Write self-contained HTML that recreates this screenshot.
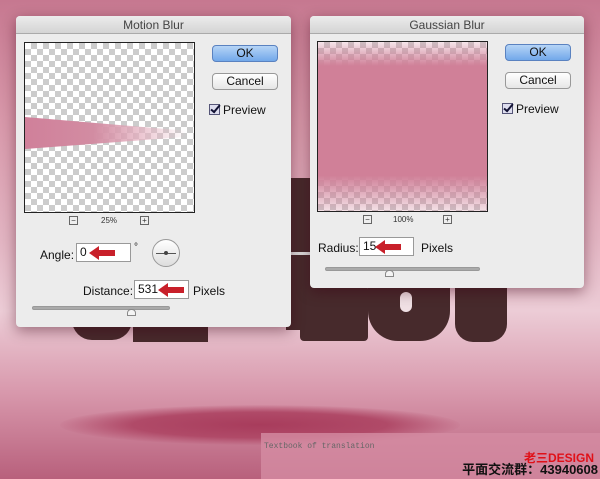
<!DOCTYPE html>
<html><head><meta charset="utf-8"><style>
*{margin:0;padding:0;box-sizing:border-box}
body{width:600px;height:479px;overflow:hidden;position:relative;font-family:"Liberation Sans",sans-serif;
background:linear-gradient(180deg,#c67890 0%,#d898aa 25%,#e2b4c2 50%,#ecccd6 65%,#d898ac 82%,#b8607c 100%)}
.abs{position:absolute}
.dlg{position:absolute;background:#ececec;border-radius:4px;box-shadow:0 4px 14px rgba(60,0,20,.45);overflow:hidden}
.tb{height:18px;background:linear-gradient(#ececec,#d4d4d4);border-bottom:1px solid #aaa;text-align:center;font-size:12px;line-height:18px;color:#444}
.chk{background-color:#fff;background-image:linear-gradient(45deg,#ccc 25%,transparent 25%,transparent 75%,#ccc 75%),linear-gradient(45deg,#ccc 25%,transparent 25%,transparent 75%,#ccc 75%);background-size:12px 12px;background-position:0 0,6px 6px;border:1px solid #222}
.btn{position:absolute;width:66px;height:17px;border-radius:4px;border:1px solid #999;background:linear-gradient(#fff,#e6e6e6);font-size:12px;text-align:center;line-height:15px;color:#111}
.ok{background:linear-gradient(#b6d4f6,#72a8ea);border-color:#5a82c0}
.cb{position:absolute;font-size:12px;color:#111}
.cb i{display:inline-block;width:11px;height:11px;border:1px solid #557;background:#dde;vertical-align:-1px;margin-right:3px;position:relative}
.cb i:after{content:"";position:absolute;left:3px;top:-2px;width:3px;height:8px;border:solid #113;border-width:0 2px 2px 0;transform:rotate(40deg)}
.lbl{position:absolute;font-size:12px;color:#111}
.inp{position:absolute;background:#fff;border:1px solid #999;height:19px;font-size:12px;line-height:17px;padding-left:3px;color:#111}
.arr{position:absolute;width:26px;height:14px}
.sl{position:absolute;height:4px;border-radius:2px;background:#aaa;border:1px solid #999}
.zm{position:absolute;font-size:8px;color:#333}
.zb{position:absolute;width:9px;height:9px;border:1px solid #666;font-size:8px;line-height:7px;text-align:center;color:#333;background:#eee}
.br{background:#472a2c;position:absolute}
</style></head><body>
<div class="br" style="left:286px;top:178px;width:26px;height:152px"></div>
<div class="abs" style="left:286px;top:252px;width:26px;height:3px;background:#ddd"></div>
<div class="br" style="left:300px;top:285px;width:68px;height:56px;border-radius:4px"></div>
<div class="br" style="left:368px;top:285px;width:82px;height:56px;border-radius:0 0 30px 30px"></div>
<div class="abs" style="left:400px;top:292px;width:12px;height:20px;border-radius:6px;background:#f0e0e4"></div>
<div class="br" style="left:455px;top:285px;width:52px;height:57px;border-radius:0 0 18px 18px"></div>
<div class="br" style="left:72px;top:318px;width:60px;height:22px;border-radius:0 0 20px 20px"></div>
<div class="br" style="left:133px;top:318px;width:75px;height:24px"></div>
<div class="abs" style="left:60px;top:405px;width:400px;height:40px;border-radius:50%;background:radial-gradient(ellipse at center,#a83c5c 0%,#b04a68 45%,rgba(190,90,120,0) 72%)"></div>

<div class="dlg" style="left:16px;top:16px;width:275px;height:311px">
<div class="tb">Motion Blur</div>
<div class="chk abs" style="left:8px;top:26px;width:171px;height:171px;overflow:hidden">
<div class="abs" style="left:0;top:74px;width:170px;height:32px;background:linear-gradient(90deg,#d0809a 0%,#d28ca2 40%,rgba(230,180,195,.7) 70%,rgba(255,255,255,0) 95%);clip-path:polygon(0 0,100% 45%,100% 60%,0 100%)"></div>
</div>
<div class="zb" style="left:53px;top:200px">−</div>
<div class="zm" style="left:85px;top:200px">25%</div>
<div class="zb" style="left:124px;top:200px">+</div>
<div class="btn ok" style="left:196px;top:29px">OK</div>
<div class="btn" style="left:196px;top:57px">Cancel</div>
<div class="cb" style="left:193px;top:87px"><i></i>Preview</div>
<div class="lbl" style="left:24px;top:232px">Angle:</div>
<div class="inp" style="left:60px;top:227px;width:55px">0</div>
<svg class="arr" style="left:73px;top:230px" viewBox="0 0 26 14"><path d="M0 7L10 0V4H26V10H10V14Z" fill="#c8202a"/></svg>
<div class="lbl" style="left:118px;top:226px;font-size:10px">°</div>
<div class="abs" style="left:136px;top:223px;width:28px;height:28px;border-radius:50%;border:1px solid #999;background:linear-gradient(#fff,#ddd)"><div class="abs" style="left:3px;top:13px;width:20px;height:1px;background:#555"></div><div class="abs" style="left:11px;top:11px;width:4px;height:4px;border-radius:50%;background:#444"></div></div>
<div class="lbl" style="left:67px;top:268px">Distance:</div>
<div class="inp" style="left:118px;top:264px;width:55px">531</div>
<svg class="arr" style="left:142px;top:267px" viewBox="0 0 26 14"><path d="M0 7L10 0V4H26V10H10V14Z" fill="#c8202a"/></svg>
<div class="lbl" style="left:177px;top:268px">Pixels</div>
<div class="sl" style="left:16px;top:290px;width:138px"></div>
<div class="abs" style="left:111px;top:293px;width:9px;height:7px;border:1px solid #888;border-radius:4px 4px 0 0;background:#f4f4f4"></div>
</div>

<div class="dlg" style="left:310px;top:16px;width:274px;height:272px">
<div class="tb">Gaussian Blur</div>
<div class="chk abs" style="left:7px;top:25px;width:171px;height:171px;overflow:hidden">
<div class="abs" style="left:0;top:0;width:171px;height:171px;background:linear-gradient(180deg,rgba(208,128,152,.2) 0%,#d08098 14%,#d08098 78%,rgba(208,128,152,.2) 100%)"></div>
</div>
<div class="zb" style="left:53px;top:199px">−</div>
<div class="zm" style="left:83px;top:199px">100%</div>
<div class="zb" style="left:133px;top:199px">+</div>
<div class="btn ok" style="left:195px;top:28px">OK</div>
<div class="btn" style="left:195px;top:56px">Cancel</div>
<div class="cb" style="left:192px;top:86px"><i></i>Preview</div>
<div class="lbl" style="left:8px;top:225px">Radius:</div>
<div class="inp" style="left:49px;top:221px;width:55px">15</div>
<svg class="arr" style="left:65px;top:224px" viewBox="0 0 26 14"><path d="M0 7L10 0V4H26V10H10V14Z" fill="#c8202a"/></svg>
<div class="lbl" style="left:111px;top:225px">Pixels</div>
<div class="sl" style="left:15px;top:251px;width:155px"></div>
<div class="abs" style="left:75px;top:254px;width:9px;height:7px;border:1px solid #888;border-radius:4px 4px 0 0;background:#f4f4f4"></div>
</div>

<div class="abs" style="left:261px;top:433px;width:339px;height:46px;background:rgba(212,140,162,.8)"></div>
<div class="abs" style="left:264px;top:442px;font-size:8px;color:#666;font-family:'Liberation Mono',monospace">Textbook of translation</div>
<div class="abs" style="right:6px;top:449px;font-size:12px;color:#e01018;font-weight:bold;font-family:'Liberation Sans','Noto Sans CJK SC',sans-serif">老三DESIGN</div>
<div class="abs" style="right:2px;top:462px;font-size:13px;line-height:16px;color:#111;font-weight:bold;font-family:'Liberation Sans','Noto Sans CJK SC',sans-serif">平面交流群：43940608</div>
</body></html>
